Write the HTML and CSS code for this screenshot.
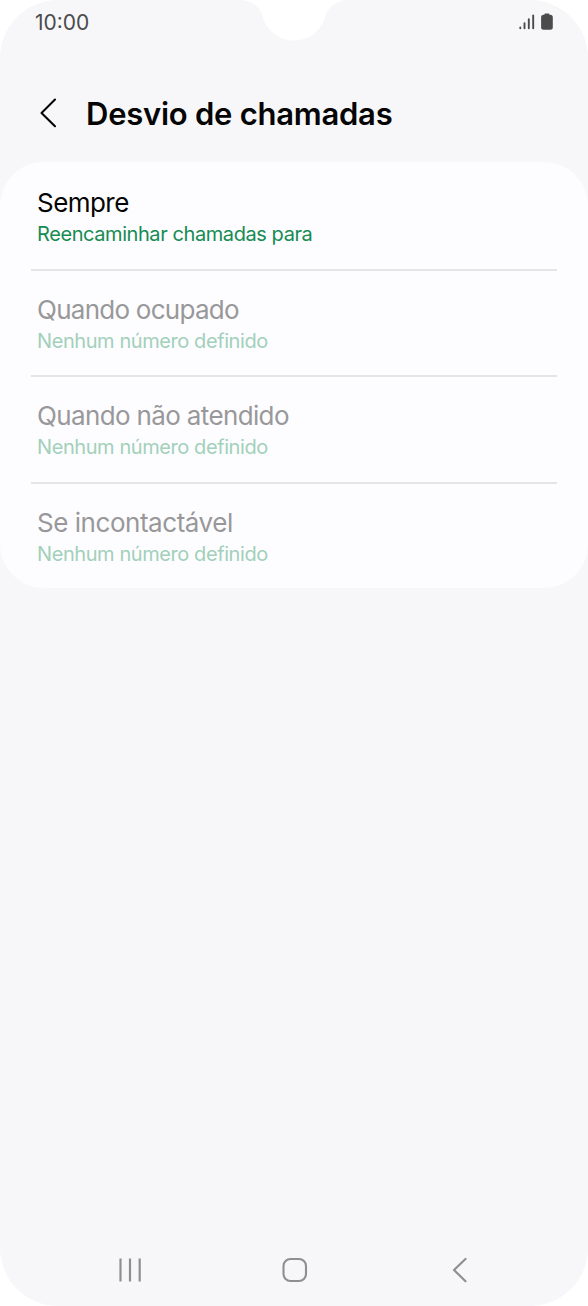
FILE: index.html
```html
<!DOCTYPE html>
<html lang="pt">
<head>
    <meta charset="UTF-8">
    <meta name="viewport" content="width=device-width, initial-scale=1.0">
    <title>Desvio de chamadas</title>
    <link rel="stylesheet" href="styles.css">
</head>
<body>
    <div class="phone">
        <svg class="notch" width="104" height="41" viewBox="0 0 104 41">
            <path d="M0 0C10 1 18 7 20.500 16C25 31 37 40.500 52 40.500C67 40.500 79 31 83.500 16C86 7 94 1 104 0Z" fill="#fff"/>
        </svg>

        <div class="status-bar">
            <span class="time">10:00</span>
            <svg class="status-icons" width="36" height="18" viewBox="0 0 36 18">
                <g stroke="#4b4b4c" stroke-width="1.900" stroke-linecap="round">
                    <path d="M2.300 14.500V15.300M6.500 10.200V15.300M10.800 6.200V15.300M15.200 2.500V15.300"/>
                </g>
                <path d="M27.300 0.500H30.300Q31.300 0.500 31.500 1.700H32.300Q34.800 1.700 34.800 4.200V14.300Q34.800 16.800 32.300 16.800H25.600Q23.100 16.800 23.100 14.300V4.200Q23.100 1.700 25.600 1.700H26.300Q26.500 0.500 27.300 0.500Z" fill="#4b4b4c"/>
            </svg>
        </div>

        <header class="header">
            <svg class="back" width="18" height="30" viewBox="0 0 18 30">
                <path d="M15 1.500L1.500 15L15 28.200" fill="none" stroke="#050505" stroke-width="2.100" stroke-linecap="round" stroke-linejoin="round"/>
            </svg>
            <h1>Desvio de chamadas</h1>
        </header>

        <main class="card">
            <div class="option">
                <div class="name always">Sempre</div>
                <div class="detail">Reencaminhar chamadas para</div>
            </div>
            <div class="option disabled">
                <div class="name busy">Quando ocupado</div>
                <div class="detail">Nenhum número definido</div>
            </div>
            <div class="option disabled">
                <div class="name unanswered">Quando não atendido</div>
                <div class="detail">Nenhum número definido</div>
            </div>
            <div class="option disabled">
                <div class="name unreachable">Se incontactável</div>
                <div class="detail">Nenhum número definido</div>
            </div>
        </main>

        <nav class="nav-bar">
            <svg width="26" height="26" viewBox="0 0 26 26">
                <path d="M3.500 1.500V24.500M13 1.500V24.500M22.700 1.500V24.500" stroke="#8f8f91" stroke-width="2.200"/>
            </svg>
            <svg width="26" height="26" viewBox="0 0 26 26">
                <rect x="1.500" y="2" width="22.500" height="22" rx="7" fill="none" stroke="#8f8f91" stroke-width="2.100"/>
            </svg>
            <svg width="26" height="26" viewBox="0 0 26 26">
                <path d="M18.500 2L7 13L18.500 24.200" fill="none" stroke="#8f8f91" stroke-width="2.200" stroke-linecap="round" stroke-linejoin="round"/>
            </svg>
        </nav>
    </div>
</body>
</html>
```
FILE: styles.css
```css
* {
    box-sizing: border-box;
}

body {
    margin: 0;
    background: #fff;
    font-family: Inter, "Liberation Sans", sans-serif;
}

.phone {
    position: relative;
    display: flex;
    flex-direction: column;
    width: 588px;
    height: 1306px;
    background: #f7f7f9;
    border-radius: 58px;
    overflow: hidden;
}

.notch {
    position: absolute;
    top: 0;
    left: 242px;
}

.status-bar {
    display: flex;
    justify-content: space-between;
    align-items: center;
    height: 44px;
    padding: 0 34px 0 35px;
}

.time {
    font-size: 21px;
    color: #4b4b4c;
}

.header {
    display: flex;
    align-items: center;
    height: 118px;
    padding: 22px 0 0 39.500px;
}

.back {
    margin-top: -3px;
}

h1 {
    margin: 0 0 0 28.500px;
    font-size: 31px;
    line-height: 40px;
    font-weight: 600;
    letter-spacing: -0.25px;
    color: #050505;
}

.card {
    height: 426px;
    padding: 0 31px;
    background: #fdfdff;
    border-radius: 44px;
}

.option {
    height: 106.600px;
    padding: 24px 6px 0;
}

.option + .option {
    padding-top: 22px;
    border-top: 2px solid #e5e5e8;
}

.name {
    font-size: 26px;
    line-height: 33px;
    color: #050505;
    white-space: nowrap;
}

.always {
    letter-spacing: -0.55px;
}

.busy {
    letter-spacing: -0.74px;
}

.unanswered {
    letter-spacing: -0.64px;
}

.unreachable {
    letter-spacing: -0.46px;
}

.detail {
    font-size: 20px;
    line-height: 30px;
    letter-spacing: -0.42px;
    color: #168b52;
    white-space: nowrap;
}

.disabled .name {
    color: #98989a;
}

.disabled .detail {
    color: #a2d0ba;
}

.nav-bar {
    display: flex;
    justify-content: space-between;
    margin-top: auto;
    padding: 0 115.500px 23px 116.500px;
}
```
